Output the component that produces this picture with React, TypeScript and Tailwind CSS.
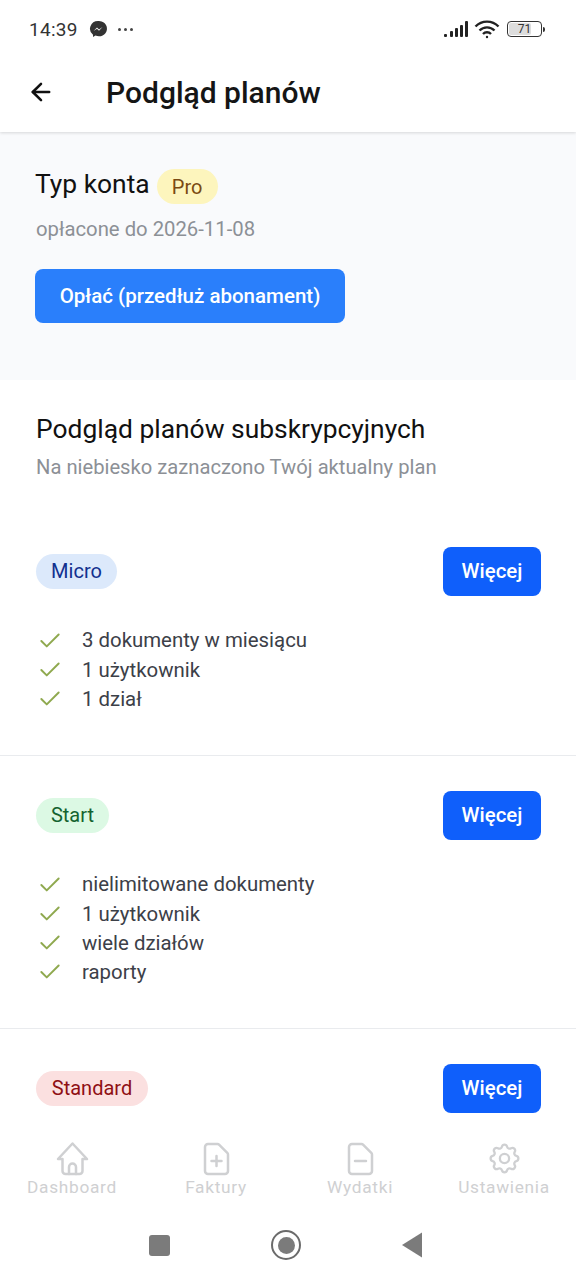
import { ArrowLeft, Check } from 'lucide-react';
import { TbSettings } from 'react-icons/tb';

const plans = [
	{
		name: 'Micro',
		badge: 'w-[81px] bg-[#dce9fb] text-[#12308f]',
		features: ['3 dokumenty w miesiącu', '1 użytkownik', '1 dział'],
	},
	{
		name: 'Start',
		badge: 'w-[73px] bg-[#dcf9e4] text-[#14632f]',
		features: ['nielimitowane dokumenty', '1 użytkownik', 'wiele działów', 'raporty'],
	},
];

const TabSvg = ({ children }: { children: React.ReactNode }) => (
	<svg
		width="37"
		height="37"
		viewBox="0 0 37 37"
		fill="none"
		stroke="currentColor"
		strokeWidth="2.5"
		strokeLinecap="round"
		strokeLinejoin="round"
	>
		{children}
	</svg>
);

const filePath = 'M10 4h9.5q1 0 1.8.8l8 8q.7.8.7 1.7V31a3 3 0 0 1-3 3H10a3 3 0 0 1-3-3V7a3 3 0 0 1 3-3z';

const tabs = [
	{
		label: 'Dashboard',
		icon: (
			<TabSvg>
				<path d="M8.5 19H4L18.5 3.5 33 19h-4.5v12a3 3 0 0 1-3 3h-14a3 3 0 0 1-3-3z" />
				<path d="M15 34v-7a3.5 3.5 0 0 1 7 0v7" />
			</TabSvg>
		),
	},
	{
		label: 'Faktury',
		icon: (
			<TabSvg>
				<path d={filePath} />
				<path d="M18.5 16v10M13.5 21h10" />
			</TabSvg>
		),
	},
	{
		label: 'Wydatki',
		icon: (
			<TabSvg>
				<path d={filePath} />
				<path d="M13 21h11" />
			</TabSvg>
		),
	},
	{
		label: 'Ustawienia',
		icon: (
			<span className="flex size-[37px] items-center justify-center">
				<TbSettings size={39} strokeWidth={1.5} />
			</span>
		),
	},
];

const PlanHead = ({ name, badge }: { name: string; badge: string }) => (
	<div className="flex items-center justify-between pr-[35px]">
		<span className={`flex h-[35px] items-center justify-center rounded-full pb-px text-[20px] ${badge}`}>{name}</span>
		<button className="h-[49px] w-[98px] rounded-lg bg-[#0f5ffb] text-[20.4px] font-medium text-white">Więcej</button>
	</div>
);

const StatusBar = () => (
	<div className="flex h-[56px] items-center justify-between pl-[29px] pr-[31px] pt-[2px]">
		<div className="flex items-center">
			<span className="text-[19px] leading-none tracking-[0.3px] text-[#333]">14:39</span>
			<svg width="18" height="18" viewBox="0 0 18 18" className="ml-[11px]">
				<path d="M9 1a8 7.7 0 0 0-5 13.7V17l2.5-1.4A8 7.7 0 1 0 9 1z" fill="#333" />
				<path d="M4.5 11 8 7.5l2 2 3.5-2.5-3.5 3.7-2-2z" fill="#fff" />
			</svg>
			<span className="ml-[11px] flex gap-[3px]">
				<i className="size-[3px] rounded-full bg-[#444]" />
				<i className="size-[3px] rounded-full bg-[#444]" />
				<i className="size-[3px] rounded-full bg-[#444]" />
			</span>
		</div>
		<div className="flex items-center">
			<svg width="26" height="18" viewBox="0 0 26 18" fill="#222">
				<rect x="1" y="14" width="3" height="3" rx="1" />
				<rect x="7" y="11" width="3" height="6" rx="1" />
				<rect x="12" y="8" width="3" height="9" rx="1" />
				<rect x="17" y="5" width="3" height="12" rx="1" />
				<rect x="22" y="1" width="3" height="16" rx="1" />
			</svg>
			<svg width="26" height="20" viewBox="0 0 26 20" fill="none" stroke="#222" strokeWidth="2.4" className="ml-[5px]">
				<path d="M1.5 7.5a16 16 0 0 1 23 0" />
				<path d="M5.5 11.5a10.5 10.5 0 0 1 15 0" />
				<path d="M9 15a5.5 5.5 0 0 1 8 0" />
				<circle cx="13" cy="18" r="1.2" fill="#222" stroke="none" />
			</svg>
			<div className="ml-[7px] flex items-center">
				<div className="relative flex h-[16px] w-[35px] items-center justify-center rounded-[4px] border border-[#333] text-[12px] leading-none text-[#333]">
					<span className="absolute inset-y-[1px] left-[1px] w-[22px] rounded-[2px] bg-[#ddd]" />
					<span className="relative">71</span>
				</div>
				<span className="ml-[1px] h-[5px] w-[2px] rounded-r-sm bg-[#333]" />
			</div>
		</div>
	</div>
);

export default function App() {
	return (
		<div className="flex h-[1280px] w-[576px] flex-col overflow-hidden bg-white font-['Roboto',sans-serif]">
			<header className="relative z-10 bg-white shadow-[0_1px_3px_rgba(0,0,0,0.14)]">
				<StatusBar />
				<div className="flex h-[76px] items-center pl-[27px] pb-[4px]">
					<ArrowLeft size={28} strokeWidth={2.2} className="text-[#111]" />
					<h1 className="ml-[51px] text-[30px] font-medium text-[#151515]">Podgląd planów</h1>
				</div>
			</header>

			<main className="h-0 flex-1 overflow-hidden">
				<section className="h-[248px] bg-[#f9fafc] px-[36px] pt-[37px]">
					<div className="-ml-px flex h-[35px] items-center">
						<span className="pb-[4px] text-[26.4px] text-[#111]">Typ konta</span>
						<span className="ml-[7px] flex h-[35px] w-[61px] items-center justify-center rounded-full bg-[#fdf5bd] text-[20px] text-[#7a4a12]">
							Pro
						</span>
					</div>
					<p className="mt-[12px] text-[20.3px] leading-[26px] text-[#8c9096]">opłacone do 2026-11-08</p>
					<button className="-ml-px mt-[27px] h-[54px] w-[310px] rounded-lg bg-[#2a7ffb] text-[20.5px] font-medium text-white">
						Opłać (przedłuż abonament)
					</button>
				</section>

				<section className="px-[36px] pt-[32px]">
					<h2 className="text-[26.4px] leading-[34px] text-[#111]">Podgląd planów subskrypcyjnych</h2>
					<p className="mt-[8px] text-[20.2px] leading-[26px] text-[#8c9096]">Na niebiesko zaznaczono Twój aktualny plan</p>
				</section>

				<div className="mt-[67px]">
					{plans.map((plan) => (
						<div key={plan.name} className="mb-[35px] border-b border-[#e9ebee] pb-[41px] pl-[36px]">
							<PlanHead name={plan.name} badge={plan.badge} />
							<ul className="mt-[30px]">
								{plan.features.map((feature) => (
									<li key={feature} className="flex h-[29.3px] items-center text-[20.4px] text-[#3c4048]">
										<Check size={26} strokeWidth={1.8} className="ml-[1px] text-[#8fa94f]" />
										<span className="ml-[19px]">{feature}</span>
									</li>
								))}
							</ul>
						</div>
					))}
					<div className="pl-[36px]">
						<PlanHead name="Standard" badge="w-[112px] bg-[#fbe0e0] text-[#8f0f14]" />
					</div>
				</div>
			</main>

			<nav className="grid h-[90px] grid-cols-4 bg-white pt-[20px]">
				{tabs.map(({ label, icon }) => (
					<div key={label} className="flex flex-col items-center text-[#cfd0d2]">
						{icon}
						<span className="-mt-[2px] text-[17.3px] leading-[24px] tracking-[0.7px]">{label}</span>
					</div>
				))}
			</nav>

			<div className="flex h-[70px] items-center justify-center bg-white pr-[4px]">
				<span className="size-[21px] rounded-[3px] bg-[#7b7b7b]" />
				<span className="ml-[101px] flex size-[30px] items-center justify-center rounded-full border-[2.5px] border-[#6b6b6b]">
					<span className="size-[17px] rounded-full bg-[#7b7b7b]" />
				</span>
				<svg width="22" height="26" viewBox="0 0 22 26" className="ml-[100px]">
					<path d="M21 0.5V25.5L1 13z" fill="#7b7b7b" />
				</svg>
			</div>
		</div>
	);
}
